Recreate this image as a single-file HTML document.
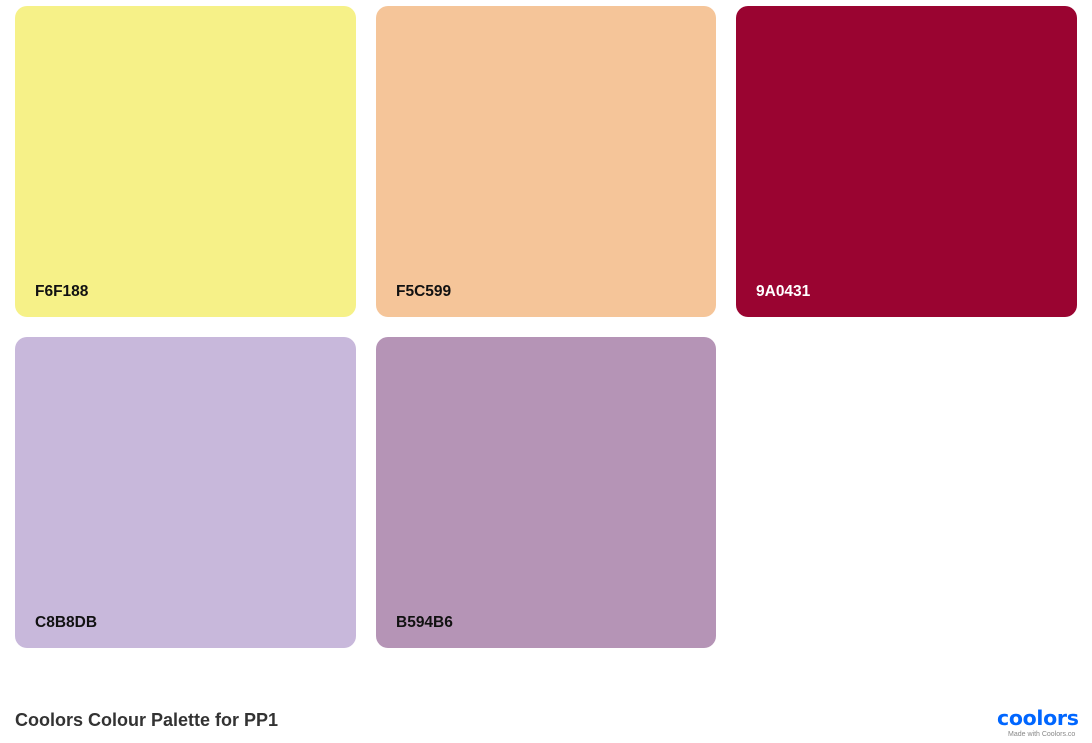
<!DOCTYPE html>
<html><head><style>
body{margin:0;width:1092px;height:743px;background:#fff;font-family:"Liberation Sans",sans-serif;position:relative;overflow:hidden}
.s{position:absolute;width:341px;height:311px;border-radius:12px}
.s span{position:absolute;left:20px;top:277px;font-size:15.5px;font-weight:bold;color:#111}
</style></head><body>
<div class="s" style="left:15px;top:6px;background:#F6F188"><span>F6F188</span></div>
<div class="s" style="left:376px;top:6px;width:340px;background:#F5C599"><span>F5C599</span></div>
<div class="s" style="left:736px;top:6px;background:#9A0431"><span style="color:#fff">9A0431</span></div>
<div class="s" style="left:15px;top:337px;background:#C8B8DB"><span>C8B8DB</span></div>
<div class="s" style="left:376px;top:337px;width:340px;background:#B594B6"><span>B594B6</span></div>
<div style="position:absolute;left:15px;top:710px;font-size:18px;font-weight:bold;color:#333">Coolors Colour Palette for PP1</div>
<div style="position:absolute;left:997px;top:706px;font-size:20.5px;font-weight:bold;color:#0066ff;letter-spacing:-0.3px;font-family:'DejaVu Sans',sans-serif">coolors</div>
<div style="position:absolute;left:1008px;top:731px;font-size:7px;color:#888">Made with Coolors.co</div>
</body></html>
